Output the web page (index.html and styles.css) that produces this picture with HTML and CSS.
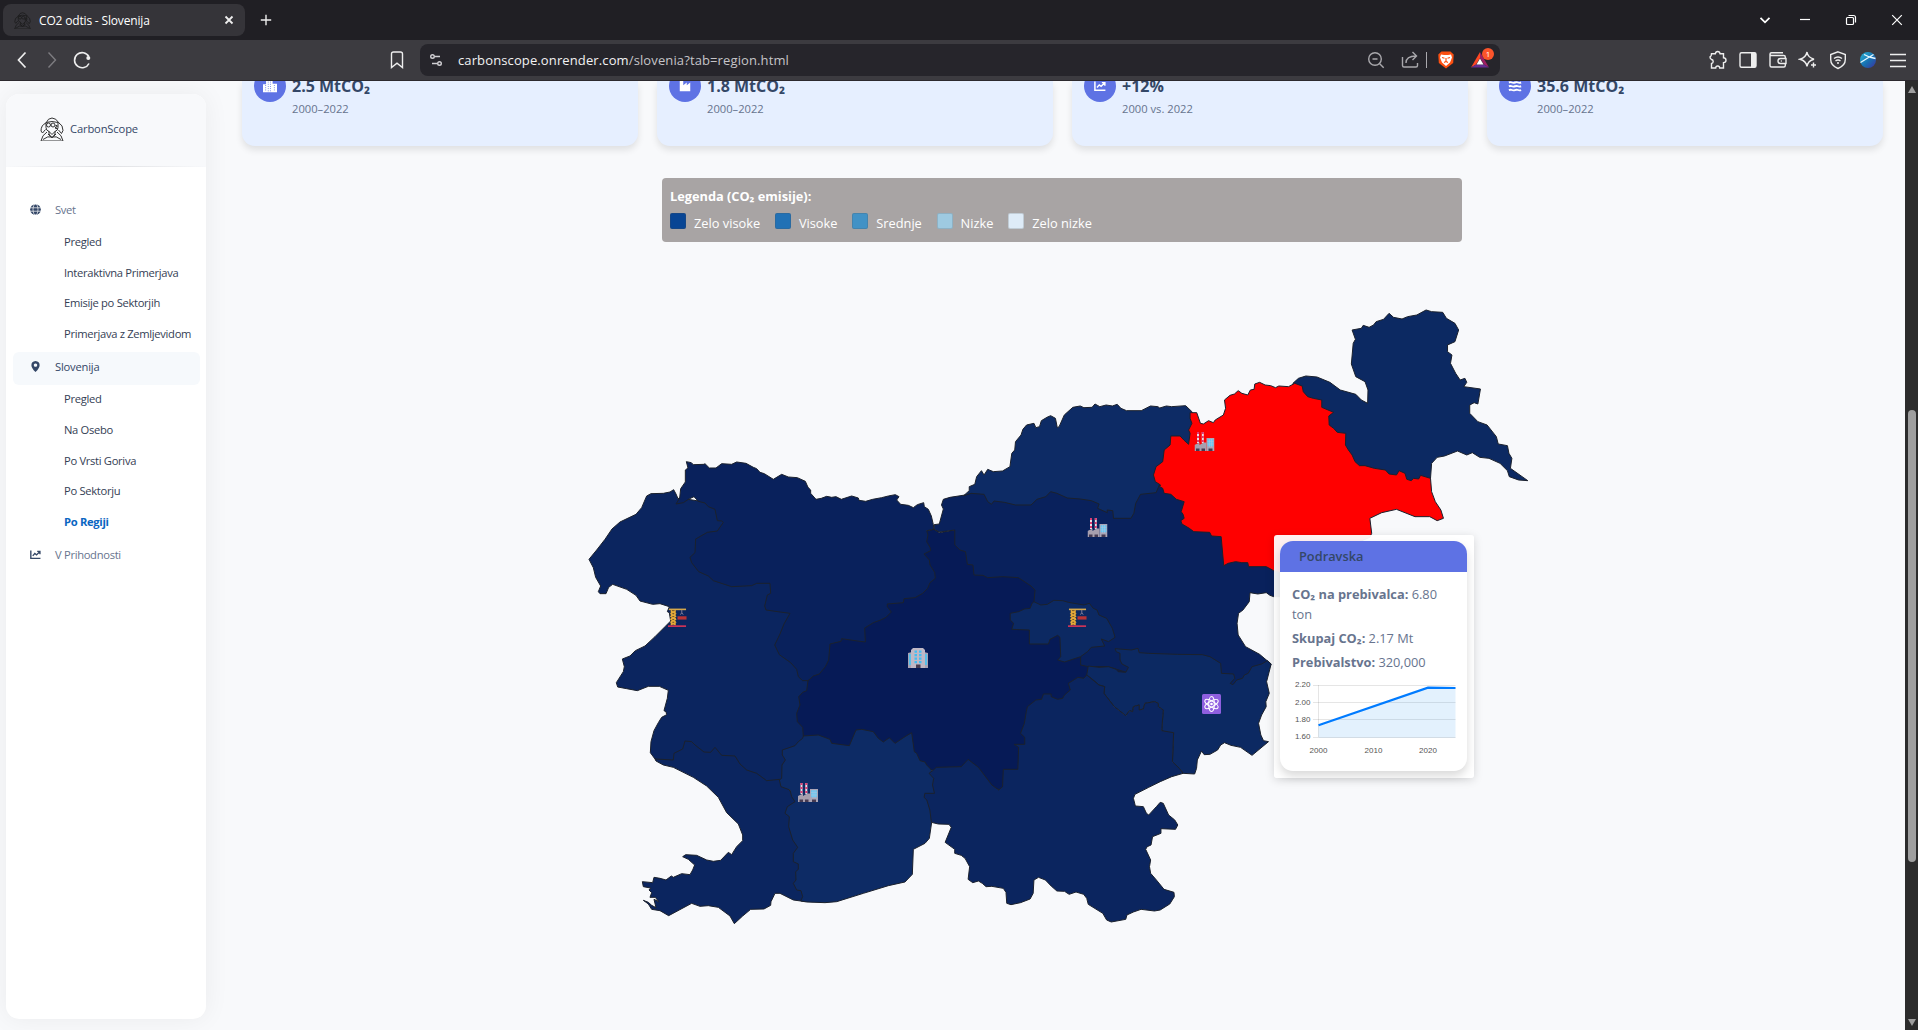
FILE: index.html
```html
<!DOCTYPE html>
<html lang="sl">
<head>
<meta charset="utf-8">
<title>CO2 odtis - Slovenija</title>
<link rel="stylesheet" href="styles.css">
</head>
<body>
<svg class="defs" width="0" height="0">
  <defs>
    <symbol id="mask" viewBox="0 0 24 24">
      <path d="M6 6Q8 1 12 1t7 5q4 2 4 7.500l-1.500 3-3-3.500M6 6q-5 2-5 8l1.500 2 3-3.500M6 5.500q6-2 12 0v5q0 3-3 4l-3 3-3-3q-3-1-3-4zM7 15Q2 18 1 24h22q-1-6-6-9M3 22.500q5-4 9-2.500 4-1.500 9 2.500M8 17l3 3M16 17l-3 3M9 14v3l3 4 3-4v-3"/>
      <circle cx="8.500" cy="8" r="2"/><circle cx="13" cy="8" r="2"/><path d="M15.500 8.500h1.500v1.500h-1.500v1.500h2"/>
    </symbol>
    <symbol id="chart" viewBox="0 0 16 16"><path d="M1.200 2v11.600h14" fill="none" stroke="currentColor" stroke-width="2"/><path d="M4 10l3-3.500 2.500 2L14 4M10.500 3.500h4v4" fill="none" stroke="currentColor" stroke-width="1.900"/></symbol>
    <symbol id="factory" viewBox="0 0 20 20">
      <path d="M2.500 1h2v11h-2zM7.300 1h2v11h-2z" fill="#e9dce4"/><path d="M2.500 1h2v2h-2zM7.300 1h2v2h-2zM2.500 5h2v2h-2zM7.300 5h2v2h-2zM2.500 9h2v2h-2zM7.300 9h2v2h-2z" fill="#dc3c72"/>
      <path d="M0 14l5-2.500V14l4-2.500h3V20H0z" fill="#a79fae"/><path d="M12 7h8v13h-8z" fill="#aaa6b8"/><path d="M13.200 8.300h5.600v7h-5.600z" fill="#62c8f5"/><path d="M15 8v8M17 8v8M13 10.600h6M13 13h6" stroke="#b9c5da" stroke-width=".5"/><path d="M1.500 17.600h3.500V20H1.500zM7 17.600h3.500V20H7zM14 17.600h4V20h-4z" fill="#453a51"/>
    </symbol>
    <symbol id="crane" viewBox="0 0 20 20">
      <path d="M3 1.500h5V18H3z" fill="#6b5228"/><path d="M3.500 2v16M7.500 2v16M3 3l5 3-5 3 5 3-5 3 5 3M8 3L3 6l5 3-5 3 5 3-5 3" fill="none" stroke="#e5aa3a" stroke-width="1.200"/><path d="M1 .6h18v1.700H1z" fill="#d6a84b"/><path d="M14.500 2v3m-1.500 2 1.500-2L16 7" stroke="#8a829a" fill="none"/><path d="M10 8.700h9.500v3.500H10z" fill="#b93436"/><path d="M0 18.200h19V20H0z" fill="#ca3358"/>
    </symbol>
  </defs>
</svg>

<header class="browser">
  <div class="tabs">
    <div class="tab">
      <svg class="favicon" width="17" height="17"><use href="#mask"/></svg>
      <span class="tab-title">CO2 odtis - Slovenija</span>
      <svg class="tab-close" width="10" height="10" viewBox="0 0 10 10"><path d="M1.500 1.500l7 7M8.500 1.500l-7 7"/></svg>
    </div>
    <svg class="new-tab" width="12" height="12" viewBox="0 0 12 12"><path d="M6 .8v10.400M.8 6h10.400"/></svg>
    <div class="window-buttons">
      <svg viewBox="0 0 20 20"><path d="M5.500 7.800l4.500 4.500 4.500-4.500" stroke-width="1.800"/></svg>
      <svg viewBox="0 0 20 20"><path d="M5 9.500h10"/></svg>
      <svg viewBox="0 0 20 20"><rect x="5.500" y="7.500" width="7" height="7" rx="1"/><path d="M7.500 5.500h5q2 0 2 2v5"/></svg>
      <svg viewBox="0 0 20 20"><path d="M5.200 5.200l9.600 9.600M14.800 5.200l-9.600 9.600"/></svg>
    </div>
  </div>
  <div class="toolbar">
    <svg class="ico nav-back" viewBox="0 0 20 20"><path d="M13.500 2.500L6.500 10l7 7.500" stroke-width="1.700"/></svg>
    <svg class="ico nav-forward" viewBox="0 0 20 20"><path d="M6.500 2.500l7 7.500-7 7.500"/></svg>
    <svg class="ico nav-reload" viewBox="0 0 20 20"><path d="M16.800 6.500A7.600 7.600 0 1 0 17 13.500" stroke-width="1.600"/><circle cx="16.300" cy="8" r="2" fill="currentColor" stroke="none"/></svg>
    <svg class="ico bookmark" viewBox="0 0 20 20"><path d="M4.500 4q0-2 2-2h7q2 0 2 2v13.500L10 13.200l-5.500 4.300z"/></svg>
    <div class="address">
      <svg class="ico" viewBox="0 0 20 20"><circle cx="6.500" cy="6.500" r="1.800"/><path d="M9 6.500h5M6 13.500h5"/><circle cx="13.500" cy="13.500" r="1.800"/></svg>
      <span class="url">carbonscope.onrender.com<span>/slovenia?tab=region.html</span></span>
      <svg class="ico dim" viewBox="0 0 20 20"><circle cx="9" cy="9" r="6.300"/><path d="M6.500 9h5M13.700 13.700l4 4"/></svg>
      <svg class="ico dim share" viewBox="0 0 20 20"><path d="M2.500 7v8.500q0 1.500 1.500 1.500h12q1.500 0 1.500-1.500V13M6 13q0-7 10-7M12.500 2l4 4-4 4"/></svg>
      <i class="divider"></i>
      <svg class="ico" viewBox="0 0 20 20"><path d="M5.500 1.500h9l3.200 3-.5 8.500L10 18.500 2.800 13l-.5-8.500z" fill="#fb5012" stroke="none"/><path d="M5 4.500l3 .5h4l3-.5 1 3-2 5-4 3.500-4-3.500-2-5z" fill="#fff" stroke="none"/><path d="M6 7.500l2.500.8M14 7.500l-2.500.8M8 12.500l2-1 2 1M10 8v3" stroke="#fb5012" stroke-width="1.200"/></svg>
      <span class="rewards"><svg class="ico" viewBox="0 0 20 20"><g stroke="none"><path d="M10 2L1 17.500l5-3L10 8z" fill="#ff4724"/><path d="M10 2l9 15.500-5-3L10 8z" fill="#9e1f63"/><path d="M1 17.500h18l-5-3H6z" fill="#662d91"/><path d="M10 8.500l3.500 6h-7z" fill="#fff"/></g></svg><b>1</b></span>
    </div>
    <div class="extensions">
      <svg class="ico" viewBox="0 0 20 20"><path d="M3.500 3.800h3.800q.3-2.300 2.400-2.300t2.400 2.300h3.400v4q2.500.2 2.500 2.400t-2.500 2.400V18h-3.800q-.1-2-2-2t-2 2H3.500v-4.500q1.700-.3 1.700-2t-1.700-2q-1.500-1-1.500-2.500 1.500-.5 1.500-3.200z"/></svg>
      <svg class="ico" viewBox="0 0 20 20"><rect x="2" y="2.700" width="16" height="14.600" rx="1.500"/><path d="M13 3h5v14h-5z" fill="currentColor" stroke="none"/></svg>
      <svg class="ico" viewBox="0 0 20 20"><path d="M17.300 8V7q0-1.500-1.500-1.500H3.500q-1.500 0-1.500-1.500 0-1.300 1.500-1.300H15M2 4v11.500Q2 17 3.500 17h12.300q1.500 0 1.500-1.500V14M18 8.500h-5.500Q10 8.500 10 11t2.500 2.500H18zM12.800 11h1"/></svg>
      <svg class="ico" viewBox="0 0 20 20"><path d="M9 2q.8 5.500 7 7.200-6.200 1.500-7 7.300Q8 10.700 2 9.200 8 7.500 9 2zM15.500 12.500v5M13 15h5"/></svg>
      <svg class="ico" viewBox="0 0 20 20"><path d="M10 1.800l7.300 2.700v5q0 6-7.300 9-7.300-3-7.300-9v-5z"/><path d="M6 8.500q4-3 8 0M7.500 11q2.500-1.800 5 0" stroke-width="1.500"/><circle cx="10" cy="13" r="1" fill="currentColor" stroke="none"/></svg>
      <svg class="ico" viewBox="0 0 20 20"><defs><linearGradient id="orb" x1="0" y1="0" x2="1" y2="1"><stop offset="0" stop-color="#29b7d8"/><stop offset=".55" stop-color="#176fb0"/><stop offset="1" stop-color="#3e2fa0"/></linearGradient></defs><circle cx="10" cy="10" r="8" fill="url(#orb)" stroke="none"/><path d="M2.500 12.500Q8 9 15.500 4.500M6 4.500Q11 7.500 17.500 8.500" stroke="#e6f8ff" stroke-width="1.300"/></svg>
      <svg class="ico" viewBox="0 0 20 20"><path d="M2 4.500h16M2 10.500h16M2 16.500h16"/></svg>
    </div>
  </div>
</header>

<div class="page">
  <aside class="sidebar">
    <div class="brand"><svg width="24" height="24"><use href="#mask"/></svg><span>CarbonScope</span></div>
    <nav class="menu">
      <a class="parent"><svg viewBox="0 0 16 16"><circle cx="8" cy="8" r="7.800" fill="currentColor"/><g fill="none" stroke="#fff" stroke-width="1"><ellipse cx="8" cy="8" rx="3.600" ry="8"/><path d="M0 5.500h16M0 10.500h16"/></g></svg>Svet</a>
      <a>Pregled</a>
      <a>Interaktivna Primerjava</a>
      <a>Emisije po Sektorjih</a>
      <a>Primerjava z Zemljevidom</a>
      <a class="parent active"><svg viewBox="0 0 16 16"><path d="M8 0q6 .5 6 6 0 4-6 10Q2 10 2 6 2 .5 8 0zm0 3.500a2.500 2.500 0 1 0 .01 0z" fill="currentColor" fill-rule="evenodd"/></svg>Slovenija</a>
      <a>Pregled</a>
      <a>Na Osebo</a>
      <a>Po Vrsti Goriva</a>
      <a>Po Sektorju</a>
      <a class="current">Po Regiji</a>
      <a class="parent"><svg><use href="#chart"/></svg>V Prihodnosti</a>
    </nav>
  </aside>

  <main class="content">
    <section class="stats">
      <article class="stat"><div class="stat-row"><i class="badge"><svg viewBox="0 0 16 16"><path d="M0 6h3.500V1H11v4.500h5V15H0z" fill="#fff"/><path d="M3 7v7M6 3v11M8.500 3v11M13 7v7" stroke="#5e72e4" stroke-dasharray="1 1.500"/></svg></i><div><h5>2.5 MtCO₂</h5><p>2000–2022</p></div></div></article>
      <article class="stat"><div class="stat-row"><i class="badge"><svg viewBox="0 0 16 16"><path d="M2 2h4v5l4-3v3l4-3v10H2z" fill="#fff"/></svg></i><div><h5>1.8 MtCO₂</h5><p>2000–2022</p></div></div></article>
      <article class="stat"><div class="stat-row"><i class="badge"><svg class="small"><use href="#chart"/></svg></i><div><h5>+12%</h5><p>2000 vs. 2022</p></div></div></article>
      <article class="stat"><div class="stat-row"><i class="badge"><svg viewBox="0 0 16 16"><path d="M1 4q2-.8 3.500 0t3.500 0 3.500 0 3.500 0M1 8.300q2-.8 3.500 0t3.500 0 3.500 0 3.500 0M1 12.600q2-.8 3.500 0t3.500 0 3.500 0 3.500 0" fill="none" stroke="#fff" stroke-width="2.200"/></svg></i><div><h5>35.6 MtCO₂</h5><p>2000–2022</p></div></div></article>
    </section>

    <section class="legend">
      <strong>Legenda (CO₂ emisije):</strong>
      <ul>
        <li><i class="l1"></i>Zelo visoke</li>
        <li><i class="l2"></i>Visoke</li>
        <li><i class="l3"></i>Srednje</li>
        <li><i class="l4"></i>Nizke</li>
        <li><i class="l5"></i>Zelo nizke</li>
      </ul>
    </section>

    <section class="map">
      <svg class="regions" width="960" height="660" viewBox="580 290 960 660">
        <g transform="translate(580 440) scale(.33333)">
          <path class="goriska" d="M27 358L50 330 75 298 96 267 120 246 168 223 185 203 200 168 213 161 250 160 270 156 281 149 288 162 294 176 299 174 400 190 640 440 760 620 760 860 670 930 640 1030 500 1030 225 957 211 938 213 905 222 872 235 848 245 832 260 824 258 815 252 812 262 775 265 751 238 739 205 739 172 752 140 746 113 741 109 728 130 695 133 680 127 657 150 648 166 632 195 618 225 590 255 560 272 543 268 518 262 515 268 500 240 491 218 493 180 483 168 466 140 448 98 433 86 442 78 461 60 461 55 455 62 438 47 412 40 383Z"/>
          <path class="osrednja" d="M1062 268L1040 272 900 480 750 600 684 722 680 752 668 757 656 770 660 795 650 820 652 845 668 862 670 888 720 960 1000 1000 1055 990 1268 1052 1560 820 1660 760 1660 670 1526 640 1540 480 1400 300 1124 270 1078 278Z"/>
          <path class="gorenjska" d="M288 192L299 174 302 146 316 126 316 90 324 84 319 65 334 68 340 74 372 73 375 71 388 84 408 84 425 71 455 73 470 66 498 70 520 82 530 86 540 97 553 101 580 118 605 103 625 111 652 113 676 124 684 142 692 150 692 160 708 178 724 175 740 169 755 172 768 170 784 178 815 168 835 174 837 181 857 184 878 178 905 173 925 168 946 164 957 170 950 180 962 193 985 196 1000 203 1012 194 1031 188 1033 200 1045 208 1054 228 1060 254 1062 268 1040 272 1044 285 1040 305 1050 322 1052 332 1032 342 1048 360 1050 375 1064 397 1066 415 1050 428 1043 445 1028 460 1005 473 972 476 970 488 922 492 922 500 934 516 918 532 902 540 880 548 854 564 856 606 832 603 785 596 783 604 750 612 746 660 736 680 718 702 700 708 684 722 668 722 655 710 650 688 632 668 598 644 584 615 600 582 612 552 630 520 600 516 558 510 554 498 562 465 572 460 570 430 530 430 515 437 455 440 400 422 385 408 356 395 335 368 330 352 345 338 347 297 382 277 412 273 430 247 425 243 412 242 405 208 385 200 375 189 355 184 342 170 325 178 310 188Z"/>
          <path class="obalno" d="M225 957L280 960 282 940 308 927 315 903 335 905 345 915 372 936 392 937 405 922 425 946 465 948 480 972 500 990 530 1000 560 1022 600 1018 670 1100 700 1385 662 1383 640 1380 600 1360 585 1360 573 1385 572 1396 552 1407 512 1408 488 1428 463 1451 450 1428 415 1402 385 1397 360 1399 335 1390 266 1427 240 1412 215 1408 205 1392 190 1381 205 1387 215 1396 228 1403 222 1378 236 1385 226 1372 210 1372 215 1358 207 1350 212 1344 190 1340 187 1325 218 1328 222 1312 240 1315 258 1320 274 1308 280 1312 305 1301 330 1304 338 1290 344 1275 325 1258 308 1250 317 1244 350 1246 380 1260 400 1264 422 1261 445 1237 455 1244 470 1220 488 1202 488 1185 475 1152 440 1118 415 1072 380 1038 340 1012 280 982 250 975 228 963Z"/>
          <path class="notranjska" d="M670 888L668 895 655 905 645 917 607 930 607 945 616 960 606 975 605 1015 598 1020 603 1040 630 1050 635 1070 645 1085 622 1100 615 1120 628 1130 626 1160 638 1200 653 1222 640 1240 640 1265 655 1272 655 1288 647 1295 648 1320 640 1330 650 1350 663 1352 668 1370 662 1383 680 1386 735 1388 770 1385 850 1360 925 1337 975 1326 997 1303 1000 1228 1035 1210 1048 1195 1055 1147 1080 1110 1080 1010 1055 992 1050 985 1040 975 1035 966 1020 962 1010 940 1003 935 995 878 975 890 945 910 928 893 910 906 895 895 880 875 845 868 828 870 808 917 755 910 750 898 715 885Z"/>
        </g>
        <g transform="translate(960 300) scale(.3699 .33333)">
          <path class="savinjska" d="M-70 688L-70 674-56 672-45 627-50 615-45 598-27 592 14 585 245 500 540 540 850 720 900 890 848 890 838 886 828 878 805 882 784 878 782 905 765 930 753 940 749 970 752 1005 772 1040 810 1063 841 1092 805 1160 650 1170 453 1118 400 1100 347 1100 326 1095 326 1072 270 1000 200 905 203 870 192 858 158 833 115 830 75 833 62 826 38 825 35 795 20 793 15 755 0 750-14 735-14 690-56 696Z"/>
          <path class="koroska" d="M10 587L25 572 25 560 40 553 45 530 58 512 65 525 75 508 90 515 115 513 135 500 140 460 148 450 150 425 165 405 170 388 180 375 200 370 205 383 215 380 220 362 235 352 245 347 258 355 263 383 268 380 282 345 305 322 325 318 335 323 357 322 365 312 378 320 395 315 412 318 425 313 435 325 450 332 490 332 515 318 535 320 540 324 558 318 572 320 610 317 627 335 650 420 560 500 530 578 488 583 475 610 470 640 462 655 415 655 413 632 398 630 398 638 372 625 376 612 355 602 325 597 290 594 262 580 245 575 232 590 208 598 192 615 150 615 120 607 92 603 85 613 75 605 65 583 30 580Z"/>
          <path class="pomurska" d="M900 250L915 235 935 228 965 231 1000 247 1028 270 1070 283 1085 300 1102 310 1103 270 1095 245 1070 230 1058 192 1063 130 1069 118 1060 90 1085 85 1090 76 1106 82 1118 75 1125 65 1145 58 1160 40 1172 52 1195 57 1210 50 1235 45 1260 30 1275 35 1305 37 1315 55 1338 70 1348 90 1338 125 1318 135 1318 155 1330 165 1326 190 1340 220 1352 240 1365 235 1370 247 1362 260 1407 267 1400 312 1390 308 1378 315 1378 340 1400 365 1425 375 1450 410 1455 432 1480 437 1484 460 1492 475 1488 505 1535 542 1510 540 1485 530 1480 512 1460 490 1430 475 1405 472 1385 458 1370 465 1345 453 1310 468 1290 472 1275 490 1272 535 1240 560 1050 520 940 350Z"/>
          <path class="podravska" d="M622 338L640 338 650 370 658 372 672 362 685 368 690 360 712 345 718 325 715 300 730 286 742 282 752 272 762 280 778 285 785 270 795 268 797 252 810 247 825 255 840 257 853 263 862 258 888 260 905 250 925 258 928 275 940 290 955 295 978 300 978 322 995 330 1010 337 997 348 998 375 1010 385 1020 397 1043 400 1042 435 1050 450 1060 465 1068 485 1080 497 1095 497 1120 505 1150 510 1160 522 1180 525 1187 512 1203 520 1208 538 1220 542 1226 535 1240 537 1245 526 1272 535 1275 575 1285 605 1300 630 1307 655 1290 662 1270 650 1230 650 1180 628 1140 638 1108 655 1113 700 1108 712 1080 725 900 830 848 812 828 800 780 800 778 788 762 788 745 785 725 790 713 797 706 710 680 708 675 697 632 695 620 685 600 672 597 662 606 655 603 643 598 635 606 605 585 598 570 583 552 580 548 565 540 560 542 555 528 545 523 525 530 500 548 485 552 450 568 435 570 408 595 408 605 420 618 433 622 400 618 390 627 370 622 355Z"/>
        </g>
        <g transform="translate(900 560) scale(.38265 .33333)">
          <path class="posavska" d="M492 318L488 345 505 360 520 375 535 380 533 400 560 440 590 467 600 452 608 455 610 440 625 435 625 450 636 447 640 430 665 425 675 430 675 440 688 450 684 512 700 518 715 518 712 605 730 625 740 640 770 642 775 625 777 600 788 573 795 584 810 583 830 570 838 555 848 548 865 556 890 562 920 586 963 545 950 542 943 525 937 490 945 465 957 440 956 425 965 400 958 365 970 312 960 302 945 312 920 320 910 340 900 345 895 355 880 360 870 374 863 370 875 355 872 342 840 340 838 310 810 290 790 284 725 283 650 280 625 278 622 265 605 270 562 266 565 275 575 280 575 300 580 312 597 322 590 337 570 335 565 328 545 320 520 322Z"/>
          <path class="zasavska" d="M288 160L310 155 325 147 340 145 345 130 350 125 368 135 385 133 402 121 425 122 440 127 480 135 495 130 505 145 515 150 520 165 540 175 555 205 562 232 545 245 526 237 535 258 500 262 490 275 472 290 430 306 412 300 420 290 418 232 412 226 392 238 388 252 338 252 338 210 292 208 297 190 288 180Z"/>
          <path class="jugovzhodna" d="M85 632L76 640 88 655 85 675 90 700 65 700 63 712 70 720 78 750 82 787 100 792 128 793 134 802 118 847 143 868 143 880 160 886 170 895 182 920 178 958 190 968 205 963 215 970 225 980 240 979 270 985 277 997 279 1030 290 1034 315 1028 340 1017 348 1000 350 960 362 952 380 960 395 978 410 993 430 994 442 1003 460 996 480 1003 488 1015 492 1033 530 1060 540 1080 552 1086 590 1078 593 1065 610 1056 630 1048 665 1053 680 1050 705 1032 717 1010 716 997 690 988 670 960 655 940 652 920 655 900 642 868 646 860 656 855 660 830 682 820 682 806 720 808 726 795 718 780 702 765 688 730 680 727 670 740 650 765 644 760 636 740 615 738 610 715 614 703 650 682 680 665 710 650 740 640 730 625 712 605 715 518 684 512 688 450 675 440 675 430 665 425 640 430 636 447 625 450 625 435 610 440 608 455 600 452 590 467 560 440 533 400 535 380 520 375 488 345 480 355 465 352 440 370 445 390 430 405 425 415 412 418 395 410 395 402 375 402 370 418 355 420 333 440 330 455 325 490 315 520 326 532 326 553 298 553 310 562 308 628 270 628 268 680 258 690 240 675 205 622 178 598 160 620 95 622Z"/>
        </g>
        <g class="pins">
          <use href="#crane" x="668" y="608" width="19" height="19"/>
          <use href="#crane" x="1068" y="608" width="19" height="19"/>
          <use href="#factory" x="798" y="782" width="20" height="20"/>
          <use href="#factory" x="1194.500" y="431" width="20" height="20"/>
          <use href="#factory" x="1087.500" y="517" width="20" height="20"/>
          <g transform="translate(908 648)"><path d="M0 5l4-1v16H0zM20 5l-4-1v16h4z" fill="#a9a3b4"/><path d="M5 0h10l2 2v18H3V2z" fill="#c0b8c5"/><path d="M1 6h2v11H1zM17 6h2v11h-2z" fill="#58bfe9"/><path d="M6.500 2.500H9v2.200H6.500zM11 2.500h2.500v2.200H11zM6.500 6H9v2.200H6.500zM11 6h2.500v2.200H11zM6.500 9.500H9v2.200H6.500zM11 9.500h2.500v2.200H11zM6.500 13H9v2.200H6.500zM11 13h2.500v2.200H11z" fill="#42bdf2"/><path d="M8 16.500h4.500V20H8z" fill="#463c51"/></g>
          <g transform="translate(1202 694)"><rect width="19" height="20" rx="1.500" fill="#8f5fe0"/><g fill="none" stroke="#fff" stroke-width="1.100"><ellipse cx="9.500" cy="10" rx="2.800" ry="7.500"/><ellipse cx="9.500" cy="10" rx="2.800" ry="7.500" transform="rotate(60 9.500 10)"/><ellipse cx="9.500" cy="10" rx="2.800" ry="7.500" transform="rotate(120 9.500 10)"/></g><circle cx="9.500" cy="10" r="1.300" fill="#fff"/></g>
        </g>
      </svg>

      <div class="tooltip">
        <div class="tip-card">
          <h6>Podravska</h6>
          <div class="tip-body">
            <p><b>CO₂ na prebivalca:</b> 6.80 ton</p>
            <p><b>Skupaj CO₂:</b> 2.17 Mt</p>
            <p><b>Prebivalstvo:</b> 320,000</p>
            <svg class="trend" width="168" height="76" viewBox="1290 682 168 76">
              <path class="grid" d="M1313 686.500h142.500M1313 703.500h142.500M1313 720.500h142.500M1313 738.500h142.500M1318.500 686v52"/>
              <path d="M1318.500 726.300L1428 688.800h27.500v50h-137z" fill="#1c8cf0" fill-opacity=".12"/>
              <path d="M1318.500 726.300L1428 688.700l27.500.3" fill="none" stroke="#007bff" stroke-width="2.200"/>
              <g text-anchor="end"><text x="1310.500" y="688">2.20</text><text x="1310.500" y="706">2.00</text><text x="1310.500" y="723">1.80</text><text x="1310.500" y="740">1.60</text></g>
              <g text-anchor="middle"><text x="1318.500" y="754">2000</text><text x="1373.500" y="754">2010</text><text x="1428" y="754">2020</text></g>
            </svg>
          </div>
        </div>
      </div>
    </section>
  </main>

  <div class="scrollbar"><i class="arrow up"></i><i class="thumb"></i><i class="arrow down"></i></div>
</div>
</body>
</html>
```
FILE: styles.css
```css
* { box-sizing: border-box; }
body {
  margin: 0;
  width: 1918px;
  height: 1030px;
  overflow: hidden;
  background: #f8f9fb;
  font-family: "Open Sans", "Noto Sans", sans-serif;
  color: #67748e;
}
h5, h6, p, ul { margin: 0; padding: 0; }
i { font-style: normal; }
.defs { position: absolute; }

/* browser frame */
.browser { height: 81px; background: #3c3b40; border-bottom: 1px solid #2c292e; color: #eee; }
.tabs { height: 40px; display: flex; align-items: center; background: #201f24; padding-left: 3px; }
.tab { width: 242px; height: 32px; display: flex; align-items: center; border-radius: 8px; background: #353439; padding: 0 11px; }
.favicon { fill: none; stroke: #1c1c1e; stroke-width: 1.2; }
.tab-title { margin-left: 8px; font-size: 12px; letter-spacing: -.17px; color: #fff; flex: 1; }
.tab-close, .new-tab { fill: none; stroke: #eee; stroke-width: 1.8; }
.new-tab { margin-left: 15px; stroke-width: 1.4; }
.window-buttons { margin-left: auto; padding-right: 11px; display: flex; }
.window-buttons svg { width: 20px; height: 20px; margin-left: 26px; fill: none; stroke: #fff; stroke-width: 1.2; }
.window-buttons svg:nth-child(2) { margin-left: 20px; }
.toolbar { height: 40px; display: flex; align-items: center; padding: 0 10px 0 12px; }
.ico { width: 20px; height: 20px; flex: none; display: block; fill: none; stroke: currentColor; stroke-width: 1.4; }
.nav-forward { margin-left: 10px; color: #7d7c80; }
.nav-reload { margin-left: 10px; }
.bookmark { margin-left: 295px; }
.address { width: 1080px; height: 32px; margin-left: 13px; padding: 0 10px 0 6px; border-radius: 8px; background: #26252b; display: flex; align-items: center; color: #d0cfd3; }
.url { flex: 1; margin-left: 12px; font-size: 13px; letter-spacing: .12px; color: #f2f2f3; }
.url span { color: #c5c4c8; }
.dim { color: #a9a8ac; }
.share { margin: 0 6px 0 14px; }
.divider { width: 1px; height: 16px; margin-right: 9px; background: #aaa9ae; }
.rewards { position: relative; margin-left: 14px; }
.rewards b { position: absolute; left: 12px; top: -2px; width: 12px; height: 12px; border-radius: 6px; background: #fb542b; color: #fff; font: 8px/12px "Open Sans", sans-serif; text-align: center; }
.extensions { margin-left: auto; display: flex; gap: 10px; }

/* page */
.page { height: 949px; display: flex; overflow: hidden; }
.sidebar { width: 200px; height: 925px; margin: 13px 36px 0 6px; flex: none; border-radius: 13px; background: #fff; box-shadow: 0 0 26px rgba(0, 0, 0, .06); overflow: hidden; }
.brand { height: 73px; display: flex; align-items: center; padding: 0 0 3px 34px; gap: 6px; background: #f8f9fb; border-bottom: 1px solid; border-image: linear-gradient(90deg, transparent, #dfe0e3, transparent) 1; font-size: 11.2px; letter-spacing: -.15px; color: #344767; }
.brand span { font-weight: 500; }
.brand svg { fill: none; stroke: #333; stroke-width: 1; }
.menu { padding: 27px 6px 0 7px; }
.menu a { height: 30.8px; display: flex; align-items: center; padding: 0 0 4px 51px; font-size: 11.2px; letter-spacing: -.31px; color: #344054; white-space: nowrap; }
.menu .parent { height: 33px; margin-top: 1px; padding-left: 17px; color: #67748e; border-radius: 6px; }
.menu svg { width: 11px; height: 11px; margin-right: 14px; color: #344767; }
.menu .active { background: #f6f9fc; color: #344767; font-weight: 500; letter-spacing: -.2px; }
.menu .current { font-weight: 700; color: #0a66c2; }

.content { width: 1642px; flex: none; }
.stats { width: 1641px; display: grid; grid-template-columns: repeat(4, 396px); justify-content: space-between; }
.stat { height: 65px; border-radius: 0 0 13px 13px; background: #e6efff; box-shadow: 0 4px 7px rgba(0, 0, 0, .1); }
.stat-row { display: flex; margin-top: -11px; padding-left: 12px; gap: 6px; }
.badge { width: 32px; height: 32px; flex: none; border-radius: 50%; background: #5e72e4; display: grid; place-items: center; color: #fff; }
.badge svg { width: 14px; height: 14px; }
.badge .small { width: 12px; height: 12px; }
.stat h5 { font-size: 16px; line-height: 22px; margin-top: 5px; font-weight: 700; color: #344767; }
.stat p { font-size: 11.2px; line-height: 18px; margin-top: 3px; }

.legend { width: 800px; height: 64px; margin: 32px 0 0 420px; padding: 9px 8px; border-radius: 4px; background: #a8a4a4; color: #fff; font-size: 12.8px; line-height: 19px; }
.legend strong { display: block; letter-spacing: -.02px; }
.legend ul { display: flex; gap: 14.8px; list-style: none; margin-top: 7px; }
.legend li { display: flex; line-height: 20px; }
.legend i { width: 16px; height: 16px; margin-right: 8px; border: 1px solid rgba(80, 80, 80, .2); border-radius: 2px; }
.l1 { background: #084594; }
.l2 { background: #2171b5; }
.l3 { background: #4292c6; }
.l4 { background: #9ecae1; }
.l5 { background: #deebf7; }

.map { position: relative; width: 960px; margin: 48px 0 0 338px; }
.regions { display: block; }
.regions path[class] { stroke: #1b212d; stroke-width: 1; stroke-linejoin: round; vector-effect: non-scaling-stroke; }
.osrednja { fill: #061a56; }
.gorenjska, .savinjska { fill: #09215c; }
.goriska, .obalno, .jugovzhodna { fill: #0b255f; }
.koroska, .notranjska { fill: #0d2b65; }
.posavska, .zasavska, .pomurska { fill: #0c2962; }
.podravska { fill: #f00; }

.tooltip { position: absolute; left: 694px; top: 245px; width: 200px; height: 243px; padding: 6px 7px 7px 6px; border-radius: 3px; background: rgba(255, 255, 255, .94); box-shadow: 0 2px 10px rgba(0, 0, 0, .15); }
.tip-card { height: 230px; border-radius: 13px; overflow: hidden; background: #fff; box-shadow: 0 5px 10px rgba(0, 0, 0, .15); }
.tip-card h6 { height: 31px; padding-left: 19px; background: #5e72e4; color: #344767; font-size: 12.8px; line-height: 31px; font-weight: 600; }
.tip-body { padding: 12px 12px 0; }
.tip-body p { font-size: 12.8px; line-height: 20px; margin-bottom: 4px; }
.trend { display: block; margin: 9px 0 0 -2px; }
.trend text { font: 8px "Liberation Sans", Arial, sans-serif; fill: #555; }
.trend .grid { fill: none; stroke: #000; stroke-opacity: .1; }

.scrollbar { width: 13px; margin-left: auto; background: #2c2c2c; display: flex; flex-direction: column; align-items: center; }
.arrow { border: 4.5px solid transparent; }
.up { border-bottom: 7px solid #9f9f9f; border-top: 0; margin-top: 5px; }
.thumb { width: 8px; height: 452px; margin-top: 317px; border-radius: 4px; background: #9f9f9f; }
.down { border-top: 7px solid #9f9f9f; border-bottom: 0; margin-top: auto; margin-bottom: 4px; }
```
